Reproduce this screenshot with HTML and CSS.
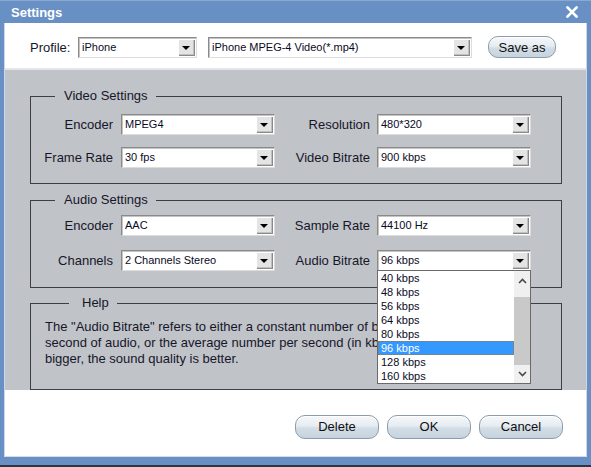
FILE: index.html
```html
<!DOCTYPE html>
<html>
<head>
<meta charset="utf-8">
<title>Settings</title>
<link rel="stylesheet" href="styles.css">
</head>
<body>
<div class="window">
  <div class="titlebar">
    <span class="title">Settings</span>
    <svg class="close" width="12" height="12" viewBox="0 0 12 12"><path d="M1.5 1.5 L10.5 10.5 M10.5 1.5 L1.5 10.5" stroke="#fff" stroke-width="2.6" stroke-linecap="square"/></svg>
  </div>
  <div class="frame">
    <div class="top">
      <span class="plabel">Profile:</span>
      <div class="combo c-profile"><span class="val">iPhone</span><span class="btn"></span></div>
      <div class="combo c-format"><span class="val">iPhone MPEG-4 Video(*.mp4)</span><span class="btn"></span></div>
      <button class="pill save">Save as</button>
    </div>
    <div class="main">
      <fieldset class="group video">
        <legend>Video Settings</legend>
        <div class="grid">
          <span class="lbl">Encoder</span>
          <div class="combo"><span class="val">MPEG4</span><span class="btn"></span></div>
          <span class="lbl lbl2">Resolution</span>
          <div class="combo"><span class="val">480*320</span><span class="btn"></span></div>
          <span class="lbl">Frame Rate</span>
          <div class="combo"><span class="val">30 fps</span><span class="btn"></span></div>
          <span class="lbl lbl2">Video Bitrate</span>
          <div class="combo"><span class="val">900 kbps</span><span class="btn"></span></div>
        </div>
      </fieldset>
      <fieldset class="group audio">
        <legend>Audio Settings</legend>
        <div class="grid">
          <span class="lbl">Encoder</span>
          <div class="combo"><span class="val">AAC</span><span class="btn"></span></div>
          <span class="lbl lbl2">Sample Rate</span>
          <div class="combo"><span class="val">44100 Hz</span><span class="btn"></span></div>
          <span class="lbl">Channels</span>
          <div class="combo"><span class="val">2 Channels Stereo</span><span class="btn"></span></div>
          <span class="lbl lbl2">Audio Bitrate</span>
          <div class="combo open"><span class="val">96 kbps</span><span class="btn"></span>
            <div class="list">
              <div class="items">
                <div class="item">40 kbps</div>
                <div class="item">48 kbps</div>
                <div class="item">56 kbps</div>
                <div class="item">64 kbps</div>
                <div class="item">80 kbps</div>
                <div class="item sel">96 kbps</div>
                <div class="item">128 kbps</div>
                <div class="item">160 kbps</div>
              </div>
              <div class="sbar">
                <div class="sb-up"><svg width="9" height="6" viewBox="0 0 9 6"><path d="M1 5 L4.5 1.5 L8 5" fill="none" stroke="#4a4a4a" stroke-width="1.6"/></svg></div>
                <div class="sb-track"><div class="sb-thumb"></div></div>
                <div class="sb-down"><svg width="9" height="6" viewBox="0 0 9 6"><path d="M1 1 L4.5 4.5 L8 1" fill="none" stroke="#4a4a4a" stroke-width="1.6"/></svg></div>
              </div>
            </div>
          </div>
        </div>
      </fieldset>
      <fieldset class="group help">
        <legend>Help</legend>
        <p class="helptext">The "Audio Bitrate" refers to either a constant number of bits per<br>second of audio, or the average number per second (in kbps). The<br>bigger, the sound quality is better.</p>
      </fieldset>
    </div>
    <div class="bottom">
      <button class="pill">Delete</button>
      <button class="pill">OK</button>
      <button class="pill">Cancel</button>
    </div>
  </div>
</div>
</body>
</html>
```
FILE: styles.css
```css
* { box-sizing: border-box; }
html, body { margin: 0; padding: 0; }
body {
  font-family: "Liberation Sans", Arial, sans-serif;
  color: #16162a;
  background: #6890c4;
}
.window {
  width: 591px;
  height: 467px;
  background: #6890c4;
  display: flex;
  flex-direction: column;
  border-bottom: 2px solid #2c3644;
}
.titlebar {
  height: 23px;
  flex: none;
  display: flex;
  align-items: center;
  justify-content: space-between;
  padding: 0 13px 0 11px;
  border-top: 1px solid #8aa8d0;
}
.title {
  color: #fff;
  font-weight: bold;
  font-size: 13px;
}
.close { display: block; }
.frame {
  flex: 1;
  margin: 0 4px 8px 4px;
  border-left: 1px solid #cdd8e6;
  border-right: 1px solid #cdd8e6;
  border-bottom: 1px solid #d4dde8;
  display: flex;
  flex-direction: column;
  background: #fff;
}
.top {
  height: 47px;
  flex: none;
  background: #fff;
  border-bottom: 2px solid #e3e6ea;
  display: flex;
  align-items: center;
  padding: 3px 0 0 25px;
}
.plabel {
  width: 48px;
  font-size: 13px;
}
.combo {
  position: relative;
  display: flex;
  height: 21px;
  background: #fff;
  border: 1px solid;
  border-color: #8a8a8a #dcdcdc #dcdcdc #8a8a8a;
  box-shadow: inset 1px 1px 0 #c4c4c4;
}
.c-profile { width: 119px; margin-right: 11px; }
.c-format { width: 264px; margin-right: 16px; }
.val {
  flex: 1;
  font-size: 11px;
  line-height: 19px;
  padding-left: 3px;
  color: #0a0a1e;
  white-space: nowrap;
  overflow: hidden;
}
.btn {
  width: 17px;
  flex: none;
  margin: 1px 1px 1px 0;
  background: #e4e4e4;
  box-shadow: inset 1px 1px 0 #fff, inset -1px -1px 0 #8a8a8a, inset -2px -2px 0 #c0c0c0;
  display: flex;
  align-items: center;
  justify-content: center;
}
.btn::after {
  content: "";
  width: 0;
  height: 0;
  border-top: 4px solid #000;
  border-left: 4px solid transparent;
  border-right: 4px solid transparent;
  margin: 1px 1px 0 0;
}
.pill {
  font-family: "Liberation Sans", Arial, sans-serif;
  font-size: 13px;
  color: #101010;
  height: 24px;
  width: 84px;
  padding: 0;
  border: 1px solid #8c9cac;
  border-radius: 10px;
  background: linear-gradient(#f6f8fa 0%, #e6ecf1 45%, #d2dde6 55%, #c6d3de 100%);
  box-shadow: inset 0 1px 0 #fff;
}
.save { width: 68px; height: 22px; }
.main {
  flex: 1;
  background: #c0c3c8;
  padding: 18px 24px 0 25px;
}
.group {
  margin: 0;
  padding: 0;
  border: 1px solid #3e3e44;
  min-width: 0;
}
.group legend {
  margin-left: 24px;
  padding: 0 8px 0 9px;
  font-size: 13px;
  line-height: 16px;
}
.video { padding: 10px 0 15px; }
.video .grid { row-gap: 12px; }
.audio { margin-top: 8px; padding: 7px 0 16px; }
.audio .grid { row-gap: 14px; }
.help { margin-top: 7px; padding: 8px 14px 22px; }
.help legend { padding-left: 13px; }
.grid {
  display: grid;
  grid-template-columns: 90px 154px 102px 154px;
  align-items: center;
}
.lbl {
  font-size: 13px;
  text-align: right;
  padding-right: 8px;
  white-space: nowrap;
}
.lbl2 { padding-right: 7px; }
.helptext {
  margin: 0;
  font-size: 13px;
  line-height: 16px;
  white-space: nowrap;
}
.list {
  position: absolute;
  left: -1px;
  top: 100%;
  width: 154px;
  height: 114px;
  background: #fff;
  border: 1px solid #6a6a6a;
  display: flex;
  z-index: 5;
}
.items { flex: 1; }
.item {
  height: 14px;
  line-height: 14px;
  font-size: 11px;
  padding-left: 3px;
  color: #0a0a1e;
}
.item.sel {
  background: #3399ff;
  color: #fff;
  outline: 1px dotted #b07030;
  outline-offset: -1px;
}
.sbar {
  width: 16px;
  flex: none;
  display: flex;
  flex-direction: column;
  background: #f0f0f0;
}
.sb-up, .sb-down {
  display: flex;
  align-items: center;
  justify-content: center;
}
.sb-up { height: 20px; }
.sb-down { height: 18px; }
.sb-track { flex: 1; padding-top: 6px; }
.sb-thumb { height: 68px; background: #c9c9c9; }
.bottom {
  flex: 1;
  background: #fff;
  display: flex;
  justify-content: flex-end;
  align-items: center;
  gap: 8px;
  padding: 7px 23px 0 0;
}
```
